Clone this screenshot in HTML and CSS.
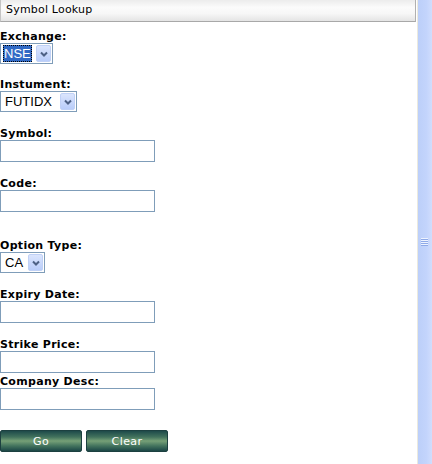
FILE: index.html
```html
<!DOCTYPE html>
<html lang="en">
<head>
    <meta charset="UTF-8">
    <title>Symbol Lookup</title>
    <link rel="stylesheet" href="styles.css">
</head>
<body>
    <div class="frame">
        <div class="panel">
            <div class="panel-title">Symbol Lookup</div>

            <form class="lookup">
                <div class="field first">
                    <label>Exchange:</label>
                    <div class="combo combo-exchange">
                        <span class="combo-value selected">NSE</span>
                        <span class="combo-arrow">
                            <svg width="8" height="6" viewBox="0 0 8 6"><path d="M1 1.5 L4 4.5 L7 1.5" fill="none" stroke="#4d6185" stroke-width="2"/></svg>
                        </span>
                    </div>
                </div>

                <div class="field after-combo">
                    <label>Instument:</label>
                    <div class="combo combo-instrument">
                        <span class="combo-value">FUTIDX</span>
                        <span class="combo-arrow">
                            <svg width="8" height="6" viewBox="0 0 8 6"><path d="M1 1.5 L4 4.5 L7 1.5" fill="none" stroke="#4d6185" stroke-width="2"/></svg>
                        </span>
                    </div>
                </div>

                <div class="field">
                    <label>Symbol:</label>
                    <input type="text" class="text-box">
                </div>

                <div class="field">
                    <label>Code:</label>
                    <input type="text" class="text-box">
                </div>

                <div class="field spaced">
                    <label>Option Type:</label>
                    <div class="combo combo-option">
                        <span class="combo-value">CA</span>
                        <span class="combo-arrow">
                            <svg width="8" height="6" viewBox="0 0 8 6"><path d="M1 1.5 L4 4.5 L7 1.5" fill="none" stroke="#4d6185" stroke-width="2"/></svg>
                        </span>
                    </div>
                </div>

                <div class="field">
                    <label>Expiry Date:</label>
                    <input type="text" class="text-box">
                </div>

                <div class="field">
                    <label>Strike Price:</label>
                    <input type="text" class="text-box">
                </div>

                <div class="field tight">
                    <label>Company Desc:</label>
                    <input type="text" class="text-box">
                </div>

                <div class="actions">
                    <button type="button" class="btn">Go</button>
                    <button type="button" class="btn">Clear</button>
                </div>
            </form>
        </div>

        <div class="scrollbar">
            <div class="grip"></div>
        </div>
    </div>
</body>
</html>
```

FILE: styles.css
```css
:root {
    --border-blue: #7f9db9;
    --label-color: #000;
    --scroll-blue: #c3d4fc;
}

* {
    margin: 0;
    padding: 0;
    box-sizing: border-box;
}

body {
    background-color: #fff;
    font-family: "DejaVu Sans", Verdana, sans-serif;
    font-size: 11px;
    color: var(--label-color);
}

.frame {
    display: flex;
    width: 432px;
    height: 464px;
    overflow: hidden;
}

.panel {
    flex: 1;
    border-right: 1px solid #ebe9de;
    padding-right: 1px;
}

.panel-title {
    height: 22px;
    line-height: 20px;
    padding-left: 5px;
    background: linear-gradient(#ececec, #fbfbfb 35%, #f7f7f7 65%, #e4e4e4);
    border: 1px solid #c4c4c4;
    border-top: none;
    border-bottom-color: #a8a8a8;
    border-right-color: #b0b0b0;
    letter-spacing: 0.2px;
}

.lookup {
    display: flex;
    flex-direction: column;
}

.field {
    display: flex;
    flex-direction: column;
    align-items: flex-start;
    margin-top: 15px;
}

.field.first {
    margin-top: 8px;
}

.field.after-combo {
    margin-top: 14px;
}

.field.spaced {
    margin-top: 27px;
}

.field.tight {
    margin-top: 2px;
}

.field label {
    font-weight: 700;
    line-height: 13px;
    height: 13px;
    letter-spacing: 0.3px;
}

.text-box {
    width: 155px;
    height: 22px;
    border: 1px solid var(--border-blue);
    background: #fff;
    outline: none;
}

.combo {
    display: flex;
    align-items: center;
    height: 21px;
    border: 1px solid var(--border-blue);
    background: #fff;
    padding: 1px;
    font-family: "Liberation Sans", Arial, sans-serif;
    font-size: 13px;
}

.combo-exchange {
    width: 53px;
}

.combo-instrument {
    width: 77px;
}

.combo-option {
    width: 45px;
}

.combo-value {
    flex: 1;
    padding-left: 3px;
    line-height: 17px;
}

.combo-value.selected {
    flex: 0 0 auto;
    margin-left: 1px;
    margin-right: auto;
    padding: 0 1px;
    background-color: #316ac5;
    color: #fff;
    outline: 1px dotted #000;
    outline-offset: -1px;
}

.combo-arrow {
    width: 15px;
    height: 17px;
    display: flex;
    align-items: center;
    justify-content: center;
    background: linear-gradient(#dbe5fd, #b9cdfa);
    border: 1px solid #c0d1f6;
    border-radius: 2px;
}

.actions {
    display: flex;
    gap: 4px;
    margin-top: 20px;
}

.btn {
    width: 82px;
    height: 22px;
    border: 1px solid #1c4040;
    border-radius: 2px;
    background: linear-gradient(#1e4a4a, #42725d 30%, #76a077 50%, #42725d 75%, #1c4646);
    color: #fff;
    font-family: "DejaVu Sans", Verdana, sans-serif;
    font-size: 11px;
    letter-spacing: 0.4px;
    cursor: pointer;
}

.scrollbar {
    width: 14px;
    position: relative;
    background: linear-gradient(90deg, #bccff9, var(--scroll-blue) 60%, #d0ddfd);
}

.grip {
    position: absolute;
    top: 238px;
    left: 3px;
    width: 7px;
    height: 8px;
    background: repeating-linear-gradient(#eef3ff 0 1px, #8faae8 1px 2px);
}
```
